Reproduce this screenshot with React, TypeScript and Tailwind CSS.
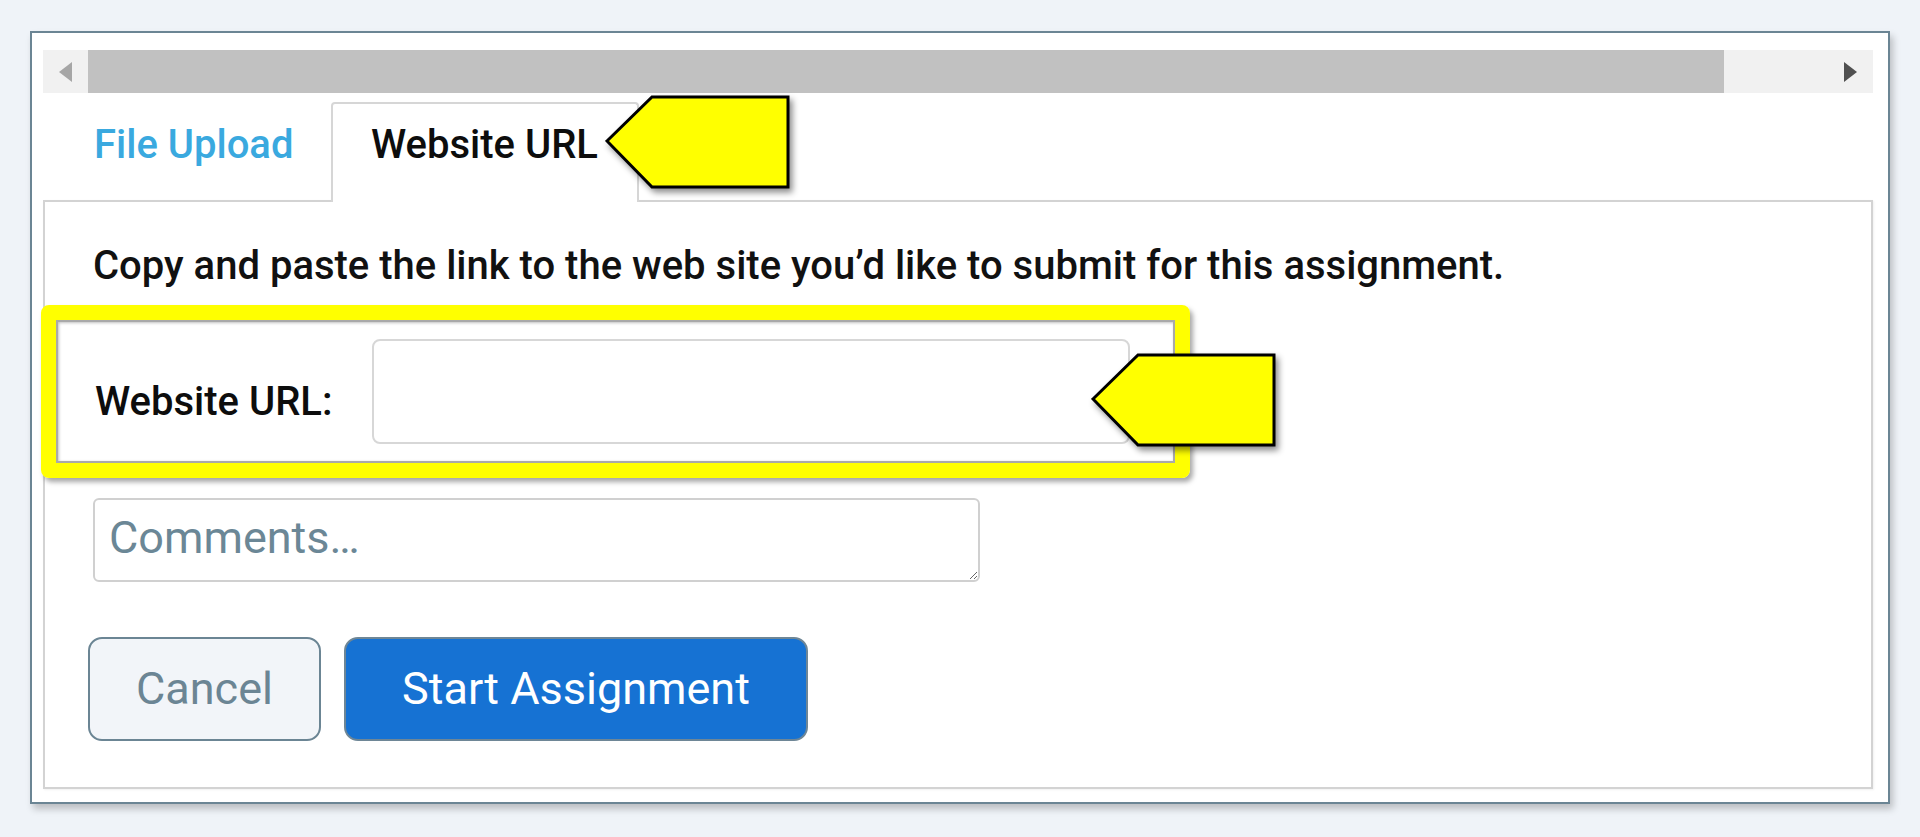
import React from "react";

/** Yellow pointer used to call out a spot on the screenshot. */
function Callout({ className }: { className: string }) {
  return (
    <svg
      width="188"
      height="96"
      viewBox="0 0 188 96"
      className={`pointer-events-none absolute z-20 drop-shadow-[3px_4px_3px_rgba(0,0,0,0.45)] ${className}`}
      aria-hidden
    >
      <polygon
        points="2,46 47,2 183,2 183,92 47,92"
        fill="#ffff00"
        stroke="#000"
        strokeWidth="3"
        strokeLinejoin="miter"
      />
    </svg>
  );
}

function ScrollStrip() {
  return (
    <div className="flex h-[43px] bg-[#f1f1f1]">
      <div className="grid w-[45px] place-items-center">
        <span className="h-0 w-0 border-y-[10px] border-r-[13px] border-y-transparent border-r-[#a6a6a6]" />
      </div>
      <div className="w-[1636px] bg-[#c1c1c1]" />
      <div className="flex-1" />
      <div className="grid w-[45px] place-items-center">
        <span className="h-0 w-0 border-y-[10px] border-l-[13px] border-y-transparent border-l-[#505050]" />
      </div>
    </div>
  );
}

export default function App() {
  return (
    <div className="relative h-[837px] bg-[#eff3f8] pl-[30px] pt-[31px] font-['Roboto',sans-serif]">
      <div className="h-[773px] w-[1860px] border-2 border-[#6b8594] bg-white pl-[11px] pr-[15px] pt-[17px] shadow-[3px_5px_7px_rgba(0,0,0,0.22)]">
        <ScrollStrip />

        {/* tabs */}
        <div className="relative z-10 -mb-[2px] mt-[9px] flex h-[100px]">
          <div className="w-[288px] pl-[51px] pt-[19px] text-[40px] font-medium leading-[48px] text-[#3aa9df]">
            File Upload
          </div>
          <div className="w-[308px] rounded-t-[4px] border-2 border-b-0 border-[#d6d6d6] bg-white pl-[38px] pt-[17px] text-[40px] font-medium leading-[48px] text-[#0d0d0d]">
            Website URL
          </div>
        </div>

        <div className="h-[589px] border-2 border-[#d3d3d3] pl-[48px] pt-[41px] shadow-[1px_1px_2px_rgba(0,0,0,0.06)]">
          <p className="text-[40px] font-medium leading-[46px] text-[#111]">
            Copy and paste the link to the web site you’d like to submit for this assignment.
          </p>

          <div className="-ml-[52px] mt-[16px] h-[173px] w-[1149px] rounded-[8px] border-[15px] border-[#ffff00] shadow-[3px_4px_5px_rgba(0,0,0,0.35)]">
            <div className="flex h-full items-center border-2 border-[#a9a9a9] pl-[37px] shadow-[inset_1px_1px_3px_rgba(0,0,0,0.25)]">
              <label className="pt-[20px] text-[40px] font-medium leading-[48px] text-[#0d0d0d]">
                Website URL:
              </label>
              <input
                type="text"
                className="ml-[40px] h-[105px] w-[758px] rounded-[8px] border-2 border-[#d7d7d7] bg-white outline-none"
              />
            </div>
          </div>

          <textarea
            placeholder="Comments…"
            className="mt-[20px] block h-[84px] w-[887px] rounded-[6px] border-2 border-[#d0d0d0] px-[14px] pt-[12px] text-[45px] leading-[52px] text-[#333] outline-none placeholder:text-[#6b8796]"
          />

          <div className="-ml-[5px] mt-[55px] flex gap-[23px]">
            <button
              type="button"
              className="h-[104px] w-[233px] rounded-[14px] border-2 border-[#6b8594] bg-[#f2f5f9] text-[45px] text-[#6b8594]"
            >
              Cancel
            </button>
            <button
              type="button"
              className="h-[104px] w-[464px] rounded-[14px] border-2 border-[#6e8696] bg-[#1672d3] text-[45px] text-white"
            >
              Start Assignment
            </button>
          </div>
        </div>
      </div>

      <Callout className="left-[605px] top-[95px]" />
      <Callout className="left-[1091px] top-[353px]" />
    </div>
  );
}
